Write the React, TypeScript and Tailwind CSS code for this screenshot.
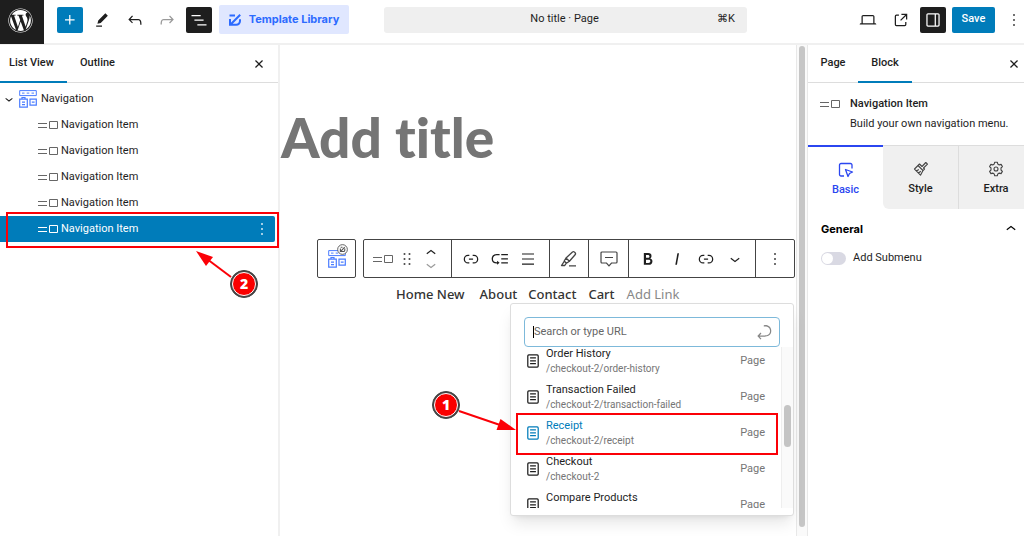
import type { ReactNode } from "react";
import { FaWordpress } from "react-icons/fa";

const paths = {
  plus: "M11 12.5V17.5H12.5V12.5H17.5V11H12.5V6H11V11H6V12.5H11Z",
  pencil: "m19 7-3-3-8.5 8.5-1 4 4-1L19 7Zm-7 11.5H5V20h7v-1.5Z",
  undo: "M18.3 11.7c-.6-.6-1.4-.9-2.3-.9H6.7l2.9-3.3-1.1-1-4.5 5L8.5 16l1-1-2.7-2.7H16c.5 0 .9.2 1.3.5 1 1 1 3.4 1 4.5v.3h1.5v-.2c0-1.5 0-4.3-1.5-5.7z",
  redo: "M15.6 6.5l-1.1 1 2.9 3.3H8c-.9 0-1.7.3-2.3.9-1.4 1.5-1.4 4.2-1.4 5.6v.2h1.5v-.3c0-1.1 0-3.5 1-4.5.3-.3.7-.5 1.3-.5h9.2L14.5 15l1.1 1.1 4.6-4.6-4.6-5z",
  listView: "M3 6h11v1.5H3V6Zm3.5 5.5h11V13h-11v-1.5ZM21 17H10v1.5h11V17Z",
  laptop: "M20.5 16h-.7V8c0-1.1-.9-2-2-2H6.2c-1.1 0-2 .9-2 2v8h-.7c-.8 0-1.5.7-1.5 1.5h20c0-.8-.7-1.5-1.5-1.5zM5.7 8c0-.3.2-.5.5-.5h11.6c.3 0 .5.2.5.5v8H5.7V8z",
  external: "M19.5 4.5h-7V6h4.44l-5.97 5.97 1.06 1.06L18 7.06v4.44h1.5v-7Zm-13 1a2 2 0 0 0-2 2v10a2 2 0 0 0 2 2h10a2 2 0 0 0 2-2v-3H17v3a.5.5 0 0 1-.5.5h-10a.5.5 0 0 1-.5-.5v-10a.5.5 0 0 1 .5-.5h3V5.5h-3Z",
  drawer: "M18 4H6c-1.1 0-2 .9-2 2v12c0 1.1.9 2 2 2h12c1.1 0 2-.9 2-2V6c0-1.1-.9-2-2-2zm-4 14.5H6c-.3 0-.5-.2-.5-.5V6c0-.3.2-.5.5-.5h8v13zm4.5-.5c0 .3-.2.5-.5.5h-2.5v-13H18c.3 0 .5.2.5.5v12z",
  more: "M13 19h-2v-2h2v2zm0-6h-2v-2h2v2zm0-6h-2V5h2v2z",
  close: "M12 13.06l3.712 3.713 1.061-1.06L13.061 12l3.712-3.712-1.06-1.06L12 10.938 8.288 7.227l-1.061 1.06L10.939 12l-3.712 3.712 1.06 1.061L12 13.061z",
  down: "M17.5 11.6L12 16l-5.5-4.4.9-1.2L12 14l4.6-3.6.9 1.2z",
  up: "M6.5 12.4L12 8l5.5 4.4-.9 1.2L12 10l-4.6 3.6-.9-1.2z",
  drag: "M8 7h2V5H8v2zm0 6h2v-2H8v2zm0 6h2v-2H8v2zm6-14v2h2V5h-2zm0 8h2v-2h-2v2zm0 6h2v-2h-2v2z",
  link: "M10 17.389H8.444A5.194 5.194 0 1 1 8.444 7H10v1.5H8.444a3.694 3.694 0 0 0 0 7.389H10v1.5ZM14 7h1.556a5.194 5.194 0 0 1 0 10.39H14v-1.5h1.556a3.694 3.694 0 0 0 0-7.39H14V7Zm-4.5 6h5v-1.5h-5V13Z",
  submenu: "M2 12c0 3.6 2.4 5.5 6 5.5h.5V19l3-2.5-3-2.5v2H8c-2.5 0-4.5-1.5-4.5-4s2-4.5 4.5-4.5h3.5V6H8c-3.6 0-6 2.4-6 6zm19.5-1h-8v1.5h8V11zm0 5h-8v1.5h8V16zm0-10h-8v1.5h8V6z",
  align: "M4 4.5h16V6H4V4.5Zm0 6.7h16v1.5H4v-1.5Zm0 6.8h16v1.5H4V18Z",
  bold: "M14.7 11.3c1-.6 1.5-1.6 1.5-3 0-2.3-1.3-3.4-4-3.4H7v14h5.8c1.4 0 2.5-.3 3.3-1 .8-.7 1.2-1.7 1.2-2.9.1-1.9-.8-3.1-2.6-3.7zm-5.1-4h2.3c.6 0 1.1.1 1.4.4.3.3.5.7.5 1.2s-.2 1-.5 1.2c-.3.3-.8.4-1.4.4H9.6V7.3zm4.6 9c-.4.3-1 .4-1.7.4H9.6v-3.9h2.9c.7 0 1.3.2 1.7.5.4.3.6.8.6 1.5s-.2 1.2-.6 1.5z",
  italic: "M12.5 5L10 19h1.9l2.5-14z",
  enter: "M6.734 16.106l2.176-2.38-1.093-1.028-3.846 4.158 3.846 4.157 1.093-1.027-2.176-2.38h2.811c1.125 0 2.25.03 3.374 0 1.428-.001 3.362-.25 4.963-1.277 1.66-1.065 2.868-2.906 2.868-5.859 0-2.479-1.327-4.896-3.65-5.93-1.82-.813-3.044-.8-4.806-.788l-.567.002v1.5c.184 0 .368 0 .553-.002 1.82-.007 2.704-.014 4.21.657 1.854.827 2.76 2.657 2.76 4.561 0 2.472-.973 3.824-2.178 4.596-1.258.807-2.864 1.04-4.163 1.04h-.02c-1.115.03-2.229 0-3.344 0H6.734z",
  page: "M15.5 7.5h-7V9h7V7.5Zm-7 3.5h7v1.5h-7V11Zm7 3.5h-7V16h7v-1.5ZM17 4H7a2 2 0 0 0-2 2v12a2 2 0 0 0 2 2h10a2 2 0 0 0 2-2V6a2 2 0 0 0-2-2ZM7 5.5h10a.5.5 0 0 1 .5.5v12a.5.5 0 0 1-.5.5H7a.5.5 0 0 1-.5-.5V6a.5.5 0 0 1 .5-.5Z",
};

function Icon({ name, className = "size-5" }: { name: keyof typeof paths; className?: string }) {
  return (
    <svg viewBox="0 0 24 24" className={`shrink-0 ${className}`} fill="currentColor" fillRule="evenodd" aria-hidden="true">
      <path d={paths[name]} />
    </svg>
  );
}

function IconButton({ label, className = "", children }: { label: string; className?: string; children: ReactNode }) {
  return (
    <button type="button" aria-label={label} className={`flex shrink-0 items-center justify-center ${className}`}>
      {children}
    </button>
  );
}

function ItemIcon() {
  return (
    <svg viewBox="0 0 20 10" className="h-[10px] w-5 shrink-0" fill="none" stroke="currentColor" aria-hidden="true">
      <path d="M0 3.5h9M0 7.5h9M11.5 1.5h8v7h-8z" />
    </svg>
  );
}

function NavigationIcon() {
  return (
    <svg viewBox="0 0 18 18" className="size-[18px] shrink-0 text-[#4a7cff]" fill="none" stroke="currentColor" aria-hidden="true">
      <path d="M.7.6h16.6v5H.7zM3 3.1h2.5M7.7 3.1h2.6M12.5 3.1H15" />
      <path d="M.7 9.2h7.6v8H.7zM3 9V7.5h3V9M3 12.2h3M3 14.6h3M11 9.2h6.3v6H11zM12.8 12.2h2.8" strokeWidth="1.2" />
    </svg>
  );
}

function Marker({ value }: { value: number }) {
  return (
    <span className="flex size-7 items-center justify-center rounded-full border border-[#444] bg-[#444] p-px">
      <span className="flex size-full items-center justify-center rounded-full border border-white bg-[#fa0000] font-['Open_Sans'] text-sm leading-none font-extrabold text-white">
        {value}
      </span>
    </span>
  );
}

const links = [
  { title: "Order History", url: "/checkout-2/order-history" },
  { title: "Transaction Failed", url: "/checkout-2/transaction-failed" },
  { title: "Receipt", url: "/checkout-2/receipt", active: true },
  { title: "Checkout", url: "/checkout-2" },
  { title: "Compare Products", url: "" },
];

function Header() {
  return (
    <header className="flex h-[45px] shrink-0 items-center border-b-2 border-[#f0f0f0]">
      <a href="#" aria-label="View pages" className="flex size-11 shrink-0 items-center justify-center self-start bg-[#1e1e1e] pr-1 pb-1 text-white">
        <FaWordpress className="size-[25px]" />
      </a>
      <div className="ml-[13px] flex items-center pb-1">
        <IconButton label="Add block" className="mr-[6px] size-[26px] rounded-xs bg-[#007cba] text-white">
          <Icon name="plus" />
        </IconButton>
        <IconButton label="Tools" className="size-[26px]">
          <Icon name="pencil" />
        </IconButton>
        <IconButton label="Undo" className="ml-[7px] size-[26px]">
          <Icon name="undo" />
        </IconButton>
        <IconButton label="Redo" className="ml-[6px] size-[26px] text-[#999]">
          <Icon name="redo" />
        </IconButton>
        <IconButton label="List View" className="ml-[6px] size-[26px] rounded-xs bg-[#1e1e1e] text-white">
          <Icon name="listView" />
        </IconButton>
        <button
          type="button"
          className="ml-[7px] flex h-[29px] w-[130px] shrink-0 items-center justify-center gap-2 rounded-xs bg-[#e0e7ff] font-['Inter'] font-bold text-[#2d6bff]"
        >
          <svg viewBox="0 0 12 12" className="size-3" fill="none" stroke="currentColor" strokeWidth="2" aria-hidden="true">
            <path d="M.5 1.5H6M1 5v5.8h6.2A3.8 3.8 0 0 0 11 7V5.2M1.8 10.2 11.2.8" />
          </svg>
          Template Library
        </button>
      </div>
      <button type="button" className="mr-[111px] mb-1 ml-[35px] flex h-[26px] flex-1 items-center rounded-[3px] bg-[#efefef] px-3">
        <span className="flex-1 pl-4 text-center">No title · Page</span>
        <span>⌘K</span>
      </button>
      <div className="flex items-center pb-1">
        <IconButton label="View" className="size-5">
          <Icon name="laptop" />
        </IconButton>
        <IconButton label="Preview in new tab" className="ml-[13px] size-5">
          <Icon name="external" />
        </IconButton>
        <IconButton label="Settings" className="ml-[9px] size-[26px] rounded-xs bg-[#1e1e1e] text-white">
          <Icon name="drawer" />
        </IconButton>
        <button type="button" className="ml-[6px] h-[26px] w-[43px] rounded-xs bg-[#007cba] font-medium text-white">
          Save
        </button>
        <IconButton label="Options" className="ml-[9px] size-5">
          <Icon name="more" />
        </IconButton>
      </div>
    </header>
  );
}

function ListPanel() {
  return (
    <aside className="w-[280px] shrink-0 border-r-2 border-[#f0f0f0]">
      <div className="flex h-[38px] items-center border-b border-[#ddd] font-medium">
        <button type="button" className="-mb-px h-[38px] w-[67px] border-b-2 border-[#007cba] pr-1">
          List View
        </button>
        <button type="button" className="ml-[13px]">
          Outline
        </button>
        <IconButton label="Close" className="mr-[9px] ml-auto size-5">
          <Icon name="close" />
        </IconButton>
      </div>
      <ul className="pt-[3px]">
        <li>
          <div className="flex h-[26px] items-center">
            <Icon name="down" className="ml-px size-4" />
            <span className="ml-[2px]">
              <NavigationIcon />
            </span>
            <a href="#" className="ml-1">
              Navigation
            </a>
          </div>
          <ul>
            {[1, 2, 3, 4].map((item) => (
              <li key={item} className="flex h-[26px] items-center gap-[3px] pl-[38px]">
                <span className="text-[#666]">
                  <ItemIcon />
                </span>
                <a href="#">Navigation Item</a>
              </li>
            ))}
            <li className="relative mr-[3px] flex h-[26px] items-center gap-[3px] rounded-r-xs bg-[#007cba] pl-[38px] text-white">
              <ItemIcon />
              <a href="#">Navigation Item</a>
              <IconButton label="Options for Navigation Item" className="mr-[3px] ml-auto size-5">
                <Icon name="more" />
              </IconButton>
              <span className="absolute -top-1 -right-1 left-[6px] h-9 border-2 border-[#fb0007]" />
              <svg viewBox="0 0 50 36" className="absolute top-[34px] left-[195px] h-9 w-[50px]" aria-hidden="true">
                <path d="M8 6l28 21" stroke="#fb0007" strokeWidth="2" />
                <path d="M1 1l17 6-7 9z" fill="#fb0007" />
              </svg>
              <span className="absolute top-[54px] left-[230px]">
                <Marker value={2} />
              </span>
            </li>
          </ul>
        </li>
      </ul>
    </aside>
  );
}

function Toolbar() {
  return (
    <div className="flex gap-[7px] text-[#1e1e1e]">
      <IconButton label="Select parent block: Navigation" className="relative size-[39px] rounded-xs border border-[#444]">
        <NavigationIcon />
        <svg viewBox="0 0 12 12" className="absolute top-1 right-[7px] size-[11px]" fill="none" stroke="#555" aria-hidden="true">
          <circle cx="6" cy="6" r="5.3" fill="#fff" />
          <path d="M4 3.5h2M3.7 5v3.2H7A1.6 1.6 0 0 0 8.5 6.5V5M3.8 8.2l4.6-4.8" strokeWidth="1.2" />
        </svg>
      </IconButton>
      <div className="flex h-[39px] divide-x divide-[#444] rounded-xs border border-[#444]">
        <div className="flex w-[88px] items-center pl-[9px]">
          <IconButton label="Navigation Item" className="text-[#666]">
            <ItemIcon />
          </IconButton>
          <IconButton label="Drag" className="ml-1">
            <Icon name="drag" />
          </IconButton>
          <div className="ml-1 flex flex-col">
            <IconButton label="Move up" className="h-3">
              <Icon name="up" />
            </IconButton>
            <IconButton label="Move down" className="h-3 text-[#999]">
              <Icon name="down" />
            </IconButton>
          </div>
        </div>
        <div className="flex w-[98px] items-center gap-[9px] pl-[9px]">
          <IconButton label="Link">
            <Icon name="link" />
          </IconButton>
          <IconButton label="Add submenu">
            <Icon name="submenu" />
          </IconButton>
          <IconButton label="Justify items">
            <Icon name="align" className="size-[18px]" />
          </IconButton>
        </div>
        <IconButton label="Highlight" className="w-[39px]">
          <svg viewBox="0 0 18 18" className="size-[18px]" fill="none" stroke="#444" strokeWidth="1.3" strokeLinejoin="round" aria-hidden="true">
            <path d="m6 8 6.5-6a1.5 1.5 0 0 1 2 .1l.6.6a1.5 1.5 0 0 1 0 2L9.4 11.2zM6 8l-1.8 3 2.2 2.2 3-2M4.4 11.2 1.5 15.5h3.3l1.5-2.3M9 15.8h7" />
          </svg>
        </IconButton>
        <IconButton label="Comment" className="w-10">
          <svg viewBox="0 0 18 18" className="size-[18px]" fill="none" stroke="#444" strokeWidth="1.2" aria-hidden="true">
            <path d="M2 2h14a1 1 0 0 1 1 1v9a1 1 0 0 1-1 1h-4.5L9 15.8 6.5 13H2a1 1 0 0 1-1-1V3a1 1 0 0 1 1-1zM5 7.5h8" />
          </svg>
        </IconButton>
        <div className="flex w-[127px] items-center gap-[9px] pl-[9px]">
          <IconButton label="Bold">
            <Icon name="bold" />
          </IconButton>
          <IconButton label="Italic">
            <Icon name="italic" />
          </IconButton>
          <IconButton label="Link text">
            <Icon name="link" />
          </IconButton>
          <IconButton label="More formatting">
            <Icon name="down" />
          </IconButton>
        </div>
        <IconButton label="Options" className="w-[38px]">
          <Icon name="more" />
        </IconButton>
      </div>
    </div>
  );
}

function LinkPopover() {
  return (
    <div className="absolute top-[25px] left-[193px] w-[284px] rounded-[3px] border border-[#ddd] bg-white pt-[13px] pb-[7px] shadow-lg">
      <div className="mr-[13px] ml-[13px] flex h-[30px] items-center rounded-[4px] border border-[#7db9da] pr-[5px] pl-2">
        <span className="h-3 w-px shrink-0 bg-black" />
        <input
          type="text"
          aria-label="Search or type URL"
          placeholder="Search or type URL"
          className="min-w-0 flex-1 outline-none placeholder:text-[#666]"
        />
        <IconButton label="Submit" className="text-[#888]">
          <Icon name="enter" />
        </IconButton>
      </div>
      <div className="flex h-[161px] overflow-hidden">
        <ul className="-mt-1 flex-1">
          {links.map((link) => (
            <li key={link.title} className="relative">
              <button type="button" className="flex h-9 w-full items-center pr-4 pl-3 text-left">
                <Icon name="page" className={link.active ? "size-5 text-[#007cba]" : "size-5"} />
                <span className="ml-[3px] flex-1 leading-[15px]">
                  <span className={link.active ? "block text-[#007cba]" : "block"}>{link.title}</span>
                  <span className="block min-h-[15px] text-[10px] text-[#757575]">{link.url}</span>
                </span>
                <span className="text-[#757575]">Page</span>
              </button>
              {link.active && <span className="absolute -top-[2px] right-[3px] left-[5px] h-[42px] border-2 border-[#fb0007]" />}
            </li>
          ))}
        </ul>
        <div className="w-3 shrink-0 border-l border-[#eee] bg-[#fafafa] px-[2px] pt-[58px]">
          <div className="h-[42px] rounded-full bg-[#c4c4c4]" />
        </div>
      </div>
      <span className="absolute top-[87px] -left-[79px]">
        <Marker value={1} />
      </span>
      <svg viewBox="0 0 60 24" className="absolute top-[104px] -left-[53px] h-6 w-[60px]" aria-hidden="true">
        <path d="M1 3l44 15" stroke="#fb0007" strokeWidth="2" />
        <path d="M58 22l-19.500 0 4-11z" fill="#fb0007" />
      </svg>
    </div>
  );
}

function SettingsPanel() {
  return (
    <aside className="w-[216px] shrink-0 overflow-hidden">
      <div className="flex h-[38px] items-center border-b border-[#ddd] font-medium">
        <button type="button" className="w-[50px]">
          Page
        </button>
        <button type="button" className="-mb-px h-[38px] w-[54px] border-b-2 border-[#007cba]">
          Block
        </button>
        <IconButton label="Close Settings" className="ml-auto size-5">
          <Icon name="close" />
        </IconButton>
      </div>
      <div className="flex h-[62px] gap-[10px] pt-[11px] pl-3">
        <span className="pt-[5px] text-[#666]">
          <ItemIcon />
        </span>
        <div>
          <h2 className="leading-5 font-medium">Navigation Item</h2>
          <p className="leading-5 whitespace-nowrap">Build your own navigation menu.</p>
        </div>
      </div>
      <div className="flex h-16 *:flex *:w-[75px] *:shrink-0 *:flex-col *:items-center *:justify-center *:gap-1 *:border-t *:border-[#ddd] *:pt-1 *:font-medium">
        <button type="button" className="border-t-2! border-[#2b46f0]! text-[#2b46f0]">
          <svg viewBox="0 0 16 16" className="size-4" fill="none" stroke="currentColor" strokeWidth="1.3" strokeLinejoin="round" aria-hidden="true">
            <path d="M6 14H3a1.500 1.500 0 0 1-1.500-1.500V3A1.500 1.500 0 0 1 3 1.500h9.500A1.500 1.500 0 0 1 14 3v3.500M7.500 7.500l7 2.500-3 1.500-1.500 3z" />
          </svg>
          Basic
        </button>
        <button type="button" className="rounded-bl-md bg-[#f0f0f0]">
          <svg viewBox="0 0 16 16" className="size-4" fill="none" stroke="#444" strokeWidth="1.1" strokeLinejoin="round" aria-hidden="true">
            <path d="m9 5.500 3.800-4 1.700 1.700-4 3.800 1 1-1.500 1.500-5-5L6.500 3zM5 4.500 1.500 8 7.500 14.200 10 9.500M3.500 10l2.300-1.500M5.500 12l2.300-1.700" />
          </svg>
          Style
        </button>
        <button type="button" className="border-l bg-[#f0f0f0]">
          <svg viewBox="0 0 16 16" className="size-4" fill="none" stroke="#444" strokeWidth="1.1" strokeLinejoin="round" aria-hidden="true">
            <path d="M6.700 1.200h2.600l.5 1.900 1.400.8 1.900-.5 1.300 2.200L13 7v2l1.400 1.400-1.300 2.200-1.900-.5-1.400.8-.5 1.900H6.700l-.5-1.900-1.400-.8-1.900.5-1.300-2.200L3 9V7L1.600 5.600l1.300-2.200 1.900.5 1.400-.8z" />
            <circle cx="8" cy="8" r="2" />
          </svg>
          Extra
        </button>
      </div>
      <button type="button" className="mt-[10px] flex h-5 w-full items-center justify-between pr-[3px] pl-[13px] font-['Inter'] font-bold text-black">
        General
        <Icon name="up" />
      </button>
      <label className="mt-[9px] flex h-5 items-center gap-[7px] pl-[13px]">
        <input
          type="checkbox"
          className="h-[13px] w-[25px] appearance-none rounded-full bg-[#d9d9e3] before:m-px before:block before:size-[11px] before:rounded-full before:bg-white"
        />
        Add Submenu
      </label>
    </aside>
  );
}

export default function App() {
  return (
    <div className="flex h-screen flex-col overflow-hidden bg-white font-['Roboto','Liberation_Sans',sans-serif] text-[11px] text-[#1e1e1e]">
      <Header />
      <div className="flex min-h-0 flex-1">
        <ListPanel />
        <main className="min-w-0 flex-1">
          <h1 className="pt-[60px] pl-px font-['Lato'] text-[55px] leading-[64px] font-black text-[#757575] [font-variant-ligatures:none]">
            Add title
          </h1>
          <div className="mt-[70px] ml-[37px]">
            <Toolbar />
            <nav className="relative">
              <ul className="flex pt-[6px] pl-[79px] font-['Noto_Sans'] text-[13px] leading-5 font-medium whitespace-nowrap text-[#333]">
                <li className="mr-[15px]"><a href="#">Home New</a></li>
                <li className="mr-[11px]"><a href="#">About</a></li>
                <li className="mr-3"><a href="#">Contact</a></li>
                <li className="mr-3"><a href="#">Cart</a></li>
                <li className="font-normal text-[#888]"><a href="#">Add Link</a></li>
              </ul>
              <LinkPopover />
            </nav>
          </div>
        </main>
        <div className="w-3 shrink-0 border-x border-[#e8e8e8] bg-[#fafafa] px-[2px] pt-px pb-[9px]">
          <div className="h-full rounded-full bg-[#c6c6c6]" />
        </div>
        <SettingsPanel />
      </div>
    </div>
  );
}
